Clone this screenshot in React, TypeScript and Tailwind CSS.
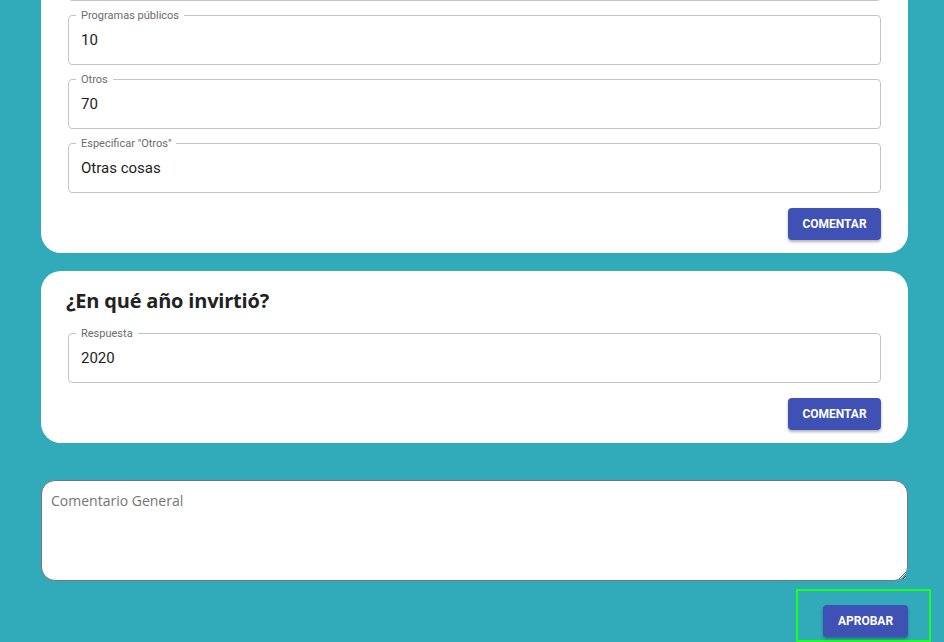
import React from 'react';

const Field = ({ label, value }: { label?: string; value?: string }) => (
  <div className="relative h-[50px] rounded-[4px] border border-[#c4c4c4] flex items-center pl-[12px]">
    {label && (
      <span className="absolute -top-[7px] left-[7px] bg-white px-[5px] text-[11px] leading-[14px] text-[#6b6b6b] font-['Roboto',sans-serif]">
        {label}
      </span>
    )}
    {value && <span className="text-[15px] text-[#1d1d1d] font-['Roboto',sans-serif]">{value}</span>}
  </div>
);

const CommentButton = () => (
  <div className="mt-[15px] flex justify-end">
    <button className="h-[32px] w-[93px] rounded-[4px] bg-[#3f51b5] text-white text-[12px] font-bold font-['Roboto',sans-serif] shadow-[0_2px_3px_rgba(0,0,0,0.3)]">
      COMENTAR
    </button>
  </div>
);

export default function App() {
  return (
    <div className="w-full h-[642px] overflow-hidden bg-[#31aab9] pl-[41px] pr-[36px]">
      <div className="-mt-[69px] rounded-[20px] bg-white px-[27px] pt-[20px] pb-[13px]">
        <div className="flex flex-col gap-[14px]">
          {/* field scrolled out of view above */}
          <Field />
          <Field label="Programas públicos" value="10" />
          <Field label="Otros" value="70" />
          <Field label='Especificar "Otros"' value="Otras cosas" />
        </div>
        <CommentButton />
      </div>

      <div className="mt-[18px] rounded-[20px] bg-white px-[27px] pt-[16px] pb-[13px]">
        <h2 className="text-[20px] leading-[28px] font-bold text-[#222] font-['Open_Sans',sans-serif] mb-[18px] -ml-[2px] tracking-[-0.2px]">
          ¿En qué año invirtió?
        </h2>
        <Field label="Respuesta" value="2020" />
        <CommentButton />
      </div>

      <textarea
        placeholder="Comentario General"
        className="mt-[37px] block w-full h-[101px] rounded-[14px] border border-[#767676] bg-white px-[9px] py-[9px] text-[14px] font-['Open_Sans',sans-serif] placeholder:text-[#757575] outline-none"
      />

      <div className="mt-[8px] ml-auto -mr-[23px] w-[135px] h-[53px] border-2 border-[#1cff1c] pl-[25px] pt-[14px]">
        <button className="h-[32px] w-[85px] rounded-[4px] bg-[#3f51b5] text-white text-[12px] font-bold font-['Roboto',sans-serif] shadow-[0_2px_3px_rgba(0,0,0,0.3)]">
          APROBAR
        </button>
      </div>
    </div>
  );
}
